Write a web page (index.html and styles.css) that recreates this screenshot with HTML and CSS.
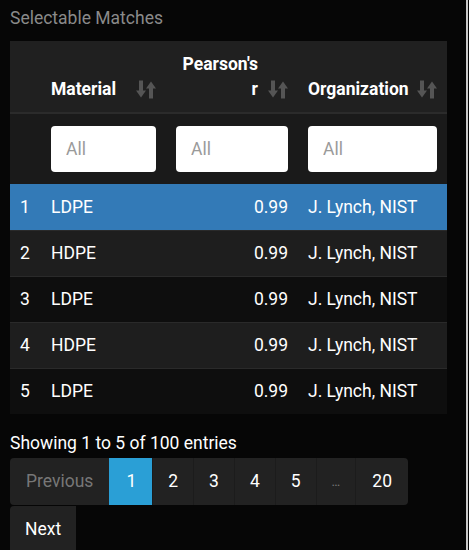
FILE: index.html
```html
<!DOCTYPE html>
<html>
<head>
<meta charset="utf-8">
<link rel="stylesheet" href="styles.css">
</head>
<body>
<div class="page">
  <div class="title">Selectable Matches</div>
  <table class="grid">
    <colgroup>
      <col class="c0"><col class="c1"><col class="c2"><col class="c3">
    </colgroup>
    <thead>
      <tr class="head">
        <th></th>
        <th><div class="hcell"><span>Material</span><svg class="sort" viewBox="0 0 20 18"><rect x="3" y="0" width="4" height="11"/><polygon points="0,10 10,10 5,17"/><polygon points="10,8 20,8 15,1"/><rect x="13" y="7" width="4" height="11"/></svg></div></th>
        <th><div class="hcell right"><span>Pearson's<br>r</span><svg class="sort" viewBox="0 0 20 18"><rect x="3" y="0" width="4" height="11"/><polygon points="0,10 10,10 5,17"/><polygon points="10,8 20,8 15,1"/><rect x="13" y="7" width="4" height="11"/></svg></div></th>
        <th><div class="hcell"><span>Organization</span><svg class="sort" viewBox="0 0 20 18"><rect x="3" y="0" width="4" height="11"/><polygon points="0,10 10,10 5,17"/><polygon points="10,8 20,8 15,1"/><rect x="13" y="7" width="4" height="11"/></svg></div></th>
      </tr>
      <tr class="filters">
        <td></td>
        <td><input class="filter" placeholder="All"></td>
        <td><input class="filter" placeholder="All"></td>
        <td><input class="filter" placeholder="All"></td>
      </tr>
    </thead>
    <tbody>
      <tr class="row selected"><td>1</td><td>LDPE</td><td class="num">0.99</td><td>J. Lynch, NIST</td></tr>
      <tr class="row even"><td>2</td><td>HDPE</td><td class="num">0.99</td><td>J. Lynch, NIST</td></tr>
      <tr class="row odd"><td>3</td><td>LDPE</td><td class="num">0.99</td><td>J. Lynch, NIST</td></tr>
      <tr class="row even"><td>4</td><td>HDPE</td><td class="num">0.99</td><td>J. Lynch, NIST</td></tr>
      <tr class="row odd"><td>5</td><td>LDPE</td><td class="num">0.99</td><td>J. Lynch, NIST</td></tr>
    </tbody>
  </table>
  <div class="info">Showing 1 to 5 of 100 entries</div>
  <ul class="pager">
    <li class="pg disabled first">Previous</li>
    <li class="pg active">1</li>
    <li class="pg">2</li>
    <li class="pg">3</li>
    <li class="pg">4</li>
    <li class="pg">5</li>
    <li class="pg disabled ell">…</li>
    <li class="pg last-row">20</li>
    <li class="pg next">Next</li>
  </ul>
</div>
</body>
</html>
```

FILE: styles.css
```css
html, body {
  margin: 0;
  padding: 0;
  background: #060606;
}
body {
  font-family: Roboto, "Liberation Sans", sans-serif;
  font-size: 17.5px;
  line-height: 25px;
  color: #ffffff;
}
.page {
  width: 437px;
  height: 550px;
  padding: 0 19px 0 10px;
  border-right: 2px solid #c9c9c9;
  overflow: hidden;
}
.title {
  color: #8a8a8a;
  font-size: 17.5px;
  line-height: 25px;
  padding-top: 6px;
  padding-bottom: 10px;
}
.grid {
  width: 437px;
  border-collapse: collapse;
  table-layout: fixed;
}
.c0 { width: 31px; }
.c1 { width: 125px; }
.c2 { width: 132px; }
.c3 { width: 149px; }
.head {
  background: #202020;
  border-bottom: 2px solid #2b2b2b;
}
.head th {
  padding: 11px 10px 10px;
  vertical-align: bottom;
  text-align: left;
  font-weight: 700;
  color: #ffffff;
}
.hcell {
  display: flex;
  align-items: flex-end;
  justify-content: space-between;
}
.hcell.right {
  justify-content: flex-end;
  gap: 10px;
  text-align: right;
}
.sort {
  width: 20px;
  height: 19px;
  fill: #555555;
  margin-bottom: 3px;
  flex: none;
}
.filters {
  background: #1a1a1a;
}
.filters td {
  padding: 12px 10px;
}
.filter {
  display: block;
  box-sizing: border-box;
  width: 100%;
  height: 46px;
  border: none;
  border-radius: 4px;
  background: #ffffff;
  padding: 0 15px;
  font-family: Roboto, "Liberation Sans", sans-serif;
  font-size: 17.5px;
  color: #333;
}
.filter::placeholder {
  color: #9a9a9a;
}
.row td {
  padding: 10px 10px 10px;
  color: #ffffff;
  white-space: nowrap;
}
.row {
  border-top: 1px solid #2a2a2a;
}
.row.selected {
  background: #337ab7;
  border-top: none;
}
.row.selected td { padding-top: 11px; }
.row.even { background: #1e1e1e; }
.row.odd { background: #0e0e0e; }
.num { text-align: right; }
.info {
  margin-top: 17px;
  line-height: 25px;
  font-size: 17.5px;
  color: #ffffff;
}
.pager {
  list-style: none;
  margin: 2px 0 0;
  padding: 0;
  display: flex;
  flex-wrap: wrap;
  width: 437px;
}
.pg {
  padding: 11px 15px;
  line-height: 25px;
  font-size: 17.5px;
  background: #222222;
  color: #ffffff;
  border-left: 1px solid #1c1c1c;
}
.pg.first {
  border-left: none;
  padding-left: 16px;
  padding-right: 16px;
  border-radius: 4px 0 0 4px;
}
.pg.disabled { color: #777777; }
.pg.ell { font-size: 13px; }
.pg.active {
  padding-left: 16px;
  padding-right: 16px;
  background: #2a9fd6;
  border-left-color: #2a9fd6;
}
.pg.last-row {
  padding-left: 16px;
  padding-right: 16px;
  border-radius: 0 4px 4px 0;
}
.pg.next {
  border-left: none;
  border-radius: 4px 0 0 0;
  margin-top: 1px;
}
```
